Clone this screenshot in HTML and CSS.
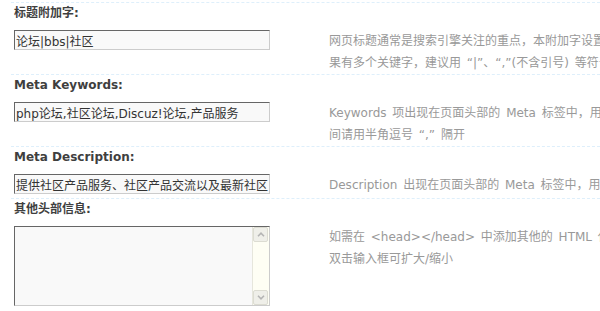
FILE: index.html
```html
<!DOCTYPE html>
<html lang="zh-CN">
<head>
    <meta charset="UTF-8">
    <meta name="viewport" content="width=device-width, initial-scale=1.0">
    <title>SEO 设置</title>
    <link rel="stylesheet" href="styles.css">
</head>
<body>
    <div class="settings">
        <div class="item">
            <div class="item-title">标题附加字:</div>
            <div class="item-body">
                <div class="item-field">
                    <input type="text" class="txt" name="seotitle" value="论坛|bbs|社区">
                </div>
                <div class="item-tip">网页标题通常是搜索引擎关注的重点，本附加字设置将出现在标题中论坛名称的后面，如<br>果有多个关键字，建议用 “|”、“,”(不含引号) 等符号分隔</div>
            </div>
        </div>
        <div class="item">
            <div class="item-title">Meta Keywords:</div>
            <div class="item-body">
                <div class="item-field">
                    <input type="text" class="txt" name="seokeywords" value="php论坛,社区论坛,Discuz!论坛,产品服务">
                </div>
                <div class="item-tip">Keywords 项出现在页面头部的 Meta 标签中，用于记录本页面的关键字，多个关键字<br>间请用半角逗号 “,” 隔开</div>
            </div>
        </div>
        <div class="item">
            <div class="item-title">Meta Description:</div>
            <div class="item-body">
                <div class="item-field">
                    <input type="text" class="txt" name="seodescription" value="提供社区产品服务、社区产品交流以及最新社区动态">
                </div>
                <div class="item-tip">Description 出现在页面头部的 Meta 标签中，用于记录本页面的概要与描述</div>
            </div>
        </div>
        <div class="item">
            <div class="item-title">其他头部信息:</div>
            <div class="item-body">
                <div class="item-field">
                    <div class="area-wrap">
                        <textarea class="area" name="seohead"></textarea>
                        <div class="fake-scroll">
                            <span class="scroll-btn">
                                <svg width="8" height="5" viewBox="0 0 8 5"><path d="M1 4.2 L4 1.2 L7 4.2" /></svg>
                            </span>
                            <span class="scroll-btn">
                                <svg width="8" height="5" viewBox="0 0 8 5"><path d="M1 0.8 L4 3.8 L7 0.8" /></svg>
                            </span>
                        </div>
                    </div>
                </div>
                <div class="item-tip">如需在 &lt;head&gt;&lt;/head&gt; 中添加其他的 HTML 代码，可以使用本设置，否则请留空<br>双击输入框可扩大/缩小</div>
            </div>
        </div>
    </div>
</body>
</html>
```

FILE: styles.css
```css
body {
    margin: 0;
    background: #fff;
    color: #333;
    font: 12px "DejaVu Sans", "Noto Sans CJK SC", sans-serif;
}
.settings {
    margin: 2px 0 0 11px;
    overflow: hidden;
}
.item-title {
    border-top: 1px dashed #deeffb;
    padding: 2px 3px 9px;
    line-height: 16px;
    font-weight: bold;
    color: #3f3f3f;
}
.item-body {
    display: grid;
    grid-template-columns: 315px auto;
}
.item-field {
    padding: 0 0 4px 3px;
}
.item-tip {
    padding-left: 3px;
    line-height: 22px;
    color: #999;
    white-space: nowrap;
    word-spacing: 2px;
}
.txt, .area {
    display: block;
    box-sizing: border-box;
    width: 256px;
    margin: 0;
    border: 1px solid #ccc;
    border-top-color: #666;
    border-left-color: #666;
    background: #f9f9f9;
    color: #333;
    font: 12px "DejaVu Sans", "Noto Sans CJK SC", sans-serif;
    outline: none;
}
.txt {
    height: 20px;
    padding: 0 1px;
}
.area {
    height: 80px;
    padding: 2px;
    resize: none;
    overflow: hidden;
}
.area-wrap {
    position: relative;
    width: 256px;
}
.fake-scroll {
    position: absolute;
    top: 1px;
    right: 1px;
    bottom: 1px;
    width: 16px;
    border-left: 1px solid #e6e6dc;
    background: #fefef4;
    display: flex;
    flex-direction: column;
    justify-content: space-between;
}
.scroll-btn {
    display: flex;
    align-items: center;
    justify-content: center;
    box-sizing: border-box;
    width: 15px;
    height: 15px;
    border: 1px solid #dcdcd2;
    border-radius: 2px;
    background: #efefe9;
}
.scroll-btn path {
    fill: none;
    stroke: #b4b4b4;
    stroke-width: 1.6;
}
```
